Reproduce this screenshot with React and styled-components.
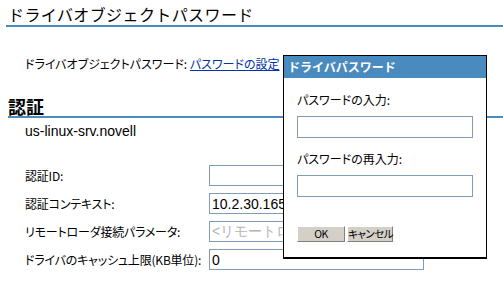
import styled, { createGlobalStyle } from "styled-components";

const GlobalStyle = createGlobalStyle`
  html, body {
    margin: 0;
    padding: 0;
    background: #ffffff;
    overflow: hidden;
  }
  body {
    font-family: "Noto Sans CJK JP", "Liberation Sans", sans-serif;
    color: #000000;
  }
`;

function App() {
  return (
    <Page>
      <GlobalStyle />
      <SectionTitle>ドライバオブジェクトパスワード</SectionTitle>
      <PasswordRow>
        ドライバオブジェクトパスワード:{" "}
        <SetLink href="#">パスワードの設定</SetLink>
      </PasswordRow>

      <SubTitle>認証</SubTitle>
      <Host>us-linux-srv.novell</Host>

      <Form>
        <Label>認証ID:</Label>
        <Field defaultValue="" />
        <Label>認証コンテキスト:</Label>
        <Field defaultValue="10.2.30.165:8090" />
        <Label>リモートローダ接続パラメータ:</Label>
        <Field disabled defaultValue="<リモートローダ接続パラメータ>" />
        <Label>ドライバのキャッシュ上限(KB単位):</Label>
        <Field defaultValue="0" />
      </Form>

      <Dialog>
        <DialogBar>ドライバパスワード</DialogBar>
        <DialogBody>
          <DialogLabel>パスワードの入力:</DialogLabel>
          <DialogField type="password" />
          <DialogLabel $second>パスワードの再入力:</DialogLabel>
          <DialogField type="password" />
          <Buttons>
            <Button $w={48}>OK</Button>
            <Button $w={46}>キャンセル</Button>
          </Buttons>
        </DialogBody>
      </Dialog>
    </Page>
  );
}

const Page = styled.div`
  position: relative;
  width: 503px;
  height: 281px;
  padding-left: 8px;
  box-sizing: border-box;
`;

const SectionTitle = styled.h1`
  margin: 0;
  padding: 4px 0 1px 0;
  margin-left: -2px;
  padding-left: 2px;
  font-size: 16px;
  line-height: 20px;
  font-weight: normal;
  letter-spacing: 0.4px;
  border-bottom: 2px solid #4a8bbf;
`;

const PasswordRow = styled.div`
  margin-top: 30px;
  padding-left: 17px;
  font-size: 12px;
  line-height: 14px;
  font-feature-settings: "palt";
`;

const SetLink = styled.a`
  color: #0033aa;
  text-decoration: underline;
`;

const SubTitle = styled.h2`
  margin: 25px 0 0 0;
  font-size: 18px;
  line-height: 20px;
  font-weight: bold;
  border-bottom: 2px solid #4a8bbf;
`;

const Host = styled.div`
  margin-top: 5px;
  padding-left: 17px;
  font-family: "Liberation Sans", sans-serif;
  font-size: 14px;
  line-height: 16px;
`;

const Form = styled.div`
  margin-top: 26px;
  padding-left: 17px;
  display: grid;
  grid-template-columns: 184px 215px;
  row-gap: 7px;
  align-items: center;
`;

const Label = styled.label`
  font-size: 12px;
  line-height: 14px;
  font-feature-settings: "palt";
  white-space: nowrap;
  letter-spacing: -0.2px;
`;

const Field = styled.input`
  box-sizing: border-box;
  width: 215px;
  height: 21px;
  margin: 0;
  padding: 0 2px;
  border: 1px solid #7f9db9;
  font-family: "Liberation Sans", sans-serif;
  font-size: 14px;
  color: #000000;
  background: #ffffff;
  outline: none;
  &:disabled {
    color: #b4b4b4;
    background: #ffffff;
  }
`;

const Dialog = styled.div`
  position: absolute;
  left: 283px;
  top: 55px;
  width: 204px;
  height: 204px;
  box-sizing: border-box;
  border: 1px solid #000000;
  border-bottom-width: 2px;
  background: #ffffff;
  display: flex;
  flex-direction: column;
`;

const DialogBar = styled.div`
  height: 22px;
  background: #4a8bbf;
  color: #ffffff;
  font-size: 12px;
  font-weight: bold;
  line-height: 22px;
  padding-left: 4px;
`;

const DialogBody = styled.div`
  padding: 15px 0 0 13px;
  display: flex;
  flex-direction: column;
`;

const DialogLabel = styled.div`
  font-size: 12px;
  line-height: 14px;
  font-feature-settings: "palt";
  margin-top: ${(p) => (p.$second ? "14px" : "0")};
  margin-bottom: 9px;
`;

const DialogField = styled.input`
  box-sizing: border-box;
  width: 176px;
  height: 22px;
  margin: 0;
  border: 1px solid #7f9db9;
  outline: none;
`;

const Buttons = styled.div`
  margin-top: 29px;
  display: flex;
  gap: 2px;
`;

const Button = styled.button`
  box-sizing: border-box;
  width: ${(p) => p.$w}px;
  height: 16px;
  padding: 0;
  background: #d4d0c8;
  border: 1px solid;
  border-color: #ffffff #808080 #808080 #ffffff;
  font-family: "Noto Sans CJK JP", "Liberation Sans", sans-serif;
  font-size: 10.5px;
  line-height: 14px;
  color: #000000;
  white-space: nowrap;
  letter-spacing: -0.5px;
  font-feature-settings: "palt";
`;

export default App;
